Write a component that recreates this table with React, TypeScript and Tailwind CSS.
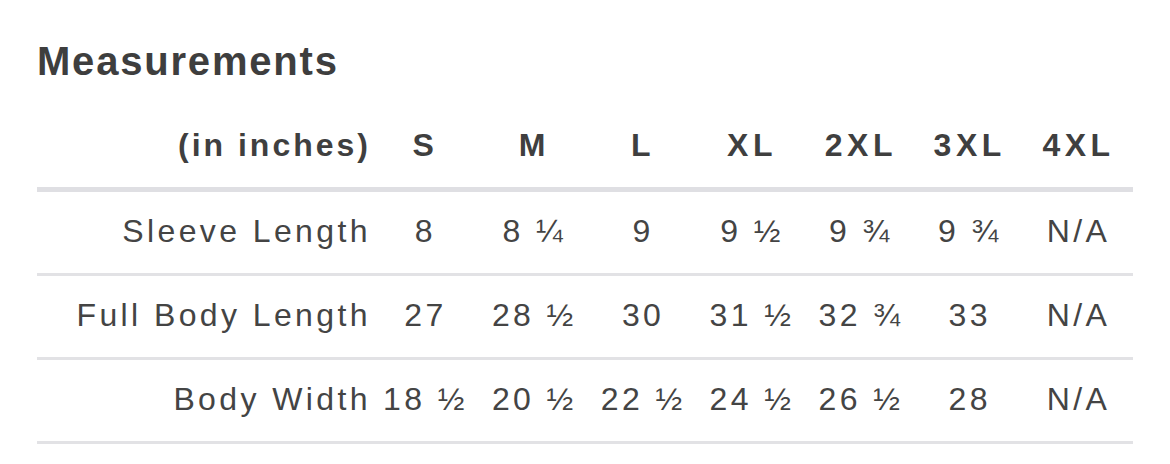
import React from "react";

const sizes = ["S", "M", "L", "XL", "2XL", "3XL", "4XL"];
const rows: { label: string; values: string[] }[] = [
  { label: "Sleeve Length", values: ["8", "8 ¼", "9", "9 ½", "9 ¾", "9 ¾", "N/A"] },
  { label: "Full Body Length", values: ["27", "28 ½", "30", "31 ½", "32 ¾", "33", "N/A"] },
  { label: "Body Width", values: ["18 ½", "20 ½", "22 ½", "24 ½", "26 ½", "28", "N/A"] },
];

export default function App() {
  return (
    <div
      className="w-[1170px] h-[464px] bg-white overflow-hidden pl-[37px] pt-[41px] text-[#444444]"
      style={{ fontFamily: '"Liberation Sans", Arial, Helvetica, sans-serif' }}
    >
      <h2 className="text-[40px] leading-[40px] font-bold tracking-[1.8px] text-[#3e3e3e]">
        Measurements
      </h2>
      <div className="w-[1096px] mt-[48px]">
        <div className="grid grid-cols-[334px_repeat(7,1fr)] border-b-[5px] border-[#dfdfe3] pb-[26px] text-[32px] leading-[32px] font-bold tracking-[4.5px] text-[#3f3f3f]">
          <div className="text-right tracking-[3px]">(in inches)</div>
          {sizes.map((s) => (
            <div key={s} className="text-center">
              {s}
            </div>
          ))}
        </div>
        {rows.map((r) => (
          <div
            key={r.label}
            className="grid grid-cols-[334px_repeat(7,1fr)] border-b-[3px] border-[#e2e2e5] pt-[23px] pb-[26px] text-[32px] leading-[32px] tracking-[3.4px]"
          >
            <div className="text-right">{r.label}</div>
            {r.values.map((v, i) => (
              <div key={i} className="text-center whitespace-nowrap">
                {v}
              </div>
            ))}
          </div>
        ))}
      </div>
    </div>
  );
}
